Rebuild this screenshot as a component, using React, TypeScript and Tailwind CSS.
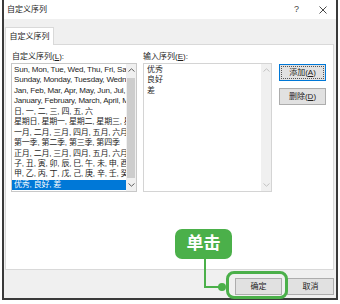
import React from "react";

const builtIn = [
  "Sun, Mon, Tue, Wed, Thu, Fri, Sat",
  "Sunday, Monday, Tuesday, Wednesday, Thursday, Friday, Saturday",
  "Jan, Feb, Mar, Apr, May, Jun, Jul, Aug, Sep, Oct, Nov, Dec",
  "January, February, March, April, May, June, July",
  "日, 一, 二, 三, 四, 五, 六",
  "星期日, 星期一, 星期二, 星期三, 星期四, 星期五, 星期六",
  "一月, 二月, 三月, 四月, 五月, 六月, 七月, 八月",
  "第一季, 第二季, 第三季, 第四季",
  "正月, 二月, 三月, 四月, 五月, 六月, 七月, 八月",
  "子, 丑, 寅, 卯, 辰, 巳, 午, 未, 申, 酉, 戌, 亥",
  "甲, 乙, 丙, 丁, 戊, 己, 庚, 辛, 壬, 癸",
  "优秀, 良好, 差",
];

const Chevron = ({ up, color }: { up?: boolean; color: string }) => (
  <svg width="7" height="4" viewBox="0 0 7 4">
    <path
      d={up ? "M0.5 3.5 L3.5 0.8 L6.5 3.5" : "M0.5 0.5 L3.5 3.2 L6.5 0.5"}
      fill="none"
      stroke={color}
      strokeWidth="1"
    />
  </svg>
);

const Button = ({ label, hotkey, focused }: { label: string; hotkey?: string; focused?: boolean }) => (
  <div
    className={`w-[47px] h-[17px] bg-[#e1e1e1] border flex items-center justify-center ${
      focused ? "border-[#0078d7] p-[1px]" : "border-[#adadad]"
    }`}
  >
    <div
      className={`w-full h-full flex items-center justify-center text-[8px] text-[#222] ${
        focused ? "border border-dotted border-[#555]" : ""
      }`}
    >
      {label}
      {hotkey && (
        <>
          (<span className="underline">{hotkey}</span>)
        </>
      )}
    </div>
  </div>
);

const App = () => {
  return (
    <div className="relative w-[340px] h-[304px] bg-white font-['Liberation_Sans','Noto_Sans_CJK_SC',sans-serif] text-[#1e1e1e]">
      <div className="ml-[2px] w-[336px] h-[300px] border-x-2 border-b-2 border-[#3a3a3a] bg-[#f0f0f0] flex flex-col">
        {/* title bar */}
        <div className="h-[19px] bg-white flex items-center pl-[3px] pr-[9px]">
          <span className="text-[8px]">自定义序列</span>
          <span className="ml-auto text-[9px] text-[#444]">?</span>
          <svg className="ml-[20px]" width="8" height="8" viewBox="0 0 8 8">
            <path d="M0.5 0.5 L7.5 7.5 M7.5 0.5 L0.5 7.5" stroke="#333" strokeWidth="0.9" />
          </svg>
        </div>

        {/* tab */}
        <div className="mt-[8px] ml-[1px] w-[49px] h-[18px] bg-white border border-b-0 border-[#d9d9d9] flex items-center justify-center text-[8px] relative z-10 -mb-[1px]">
          自定义序列
        </div>

        {/* panel */}
        <div className="ml-[1px] mr-[2px] h-[226px] bg-white border border-[#d9d9d9] pt-[7px] pl-[5px] flex gap-[6px]">
          {/* left column */}
          <div className="w-[126px] flex flex-col">
            <div className="pl-[1px] h-[11px] text-[8px] leading-[10px]">
              自定义序列(<span className="underline">L</span>):
            </div>
            <div className="h-[129px] border border-[#c8c8c8] flex">
              <div className="flex-1 pt-[1px] overflow-hidden">
                {builtIn.map((item, i) => {
                  const selected = i === builtIn.length - 1;
                  return (
                    <div
                      key={item}
                      className={`h-[10.45px] leading-[10.45px] pl-[2px] text-[8px] tracking-[-0.2px] whitespace-nowrap overflow-hidden ${
                        selected ? "bg-[#0078d7] text-white" : ""
                      }`}
                    >
                      {item}
                    </div>
                  );
                })}
              </div>
              <div className="w-[10px] bg-[#f0f0f0] flex flex-col items-center">
                <div className="h-[12px] flex items-center">
                  <Chevron up color="#606060" />
                </div>
                <div className="w-[8px] h-[100px] mt-[2px] bg-[#cdcdcd]" />
                <div className="flex-1 flex items-center">
                  <Chevron color="#606060" />
                </div>
              </div>
            </div>
          </div>

          {/* middle column */}
          <div className="w-[129px] flex flex-col">
            <div className="h-[11px] text-[8px] leading-[10px]">
              输入序列(<span className="underline">E</span>):
            </div>
            <div className="h-[129px] border border-[#d4d4d4] flex">
              <div className="flex-1 pt-[1px] pl-[3px] text-[8px]">
                {["优秀", "良好", "差"].map((line) => (
                  <div key={line} className="h-[10.45px] leading-[10.45px] overflow-hidden">
                    {line}
                  </div>
                ))}
              </div>
              <div className="w-[10px] bg-[#f0f0f0] flex flex-col items-center justify-between py-[4px]">
                <Chevron up color="#c2c2c2" />
                <Chevron color="#c2c2c2" />
              </div>
            </div>
          </div>

          {/* buttons */}
          <div className="pt-[12px] pl-[1px] flex flex-col gap-[7px]">
            <Button label="添加" hotkey="A" focused />
            <Button label="删除" hotkey="D" />
          </div>
        </div>

        {/* footer */}
        <div className="mt-[8px] pr-[2px] flex justify-end gap-[5px]">
          <Button label="确定" />
          <Button label="取消" />
        </div>
      </div>

      {/* annotation */}
      <div className="absolute left-[226px] top-[271px] w-[62px] h-[28px] border-[3px] border-[#4bb04a] rounded-[8px]" />
      <svg className="absolute left-0 top-0" width="340" height="304">
        <path d="M205 258 L205 287 L222 287" fill="none" stroke="#4bb04a" strokeWidth="2" />
        <circle cx="222" cy="287" r="4" fill="#4bb04a" />
      </svg>
      <div className="absolute left-[175px] top-[229px] w-[57px] h-[30px] bg-[#4bb04a] rounded-[7px] flex items-center justify-center text-white text-[17px] font-bold">
        单击
      </div>
    </div>
  );
};

export default App;
